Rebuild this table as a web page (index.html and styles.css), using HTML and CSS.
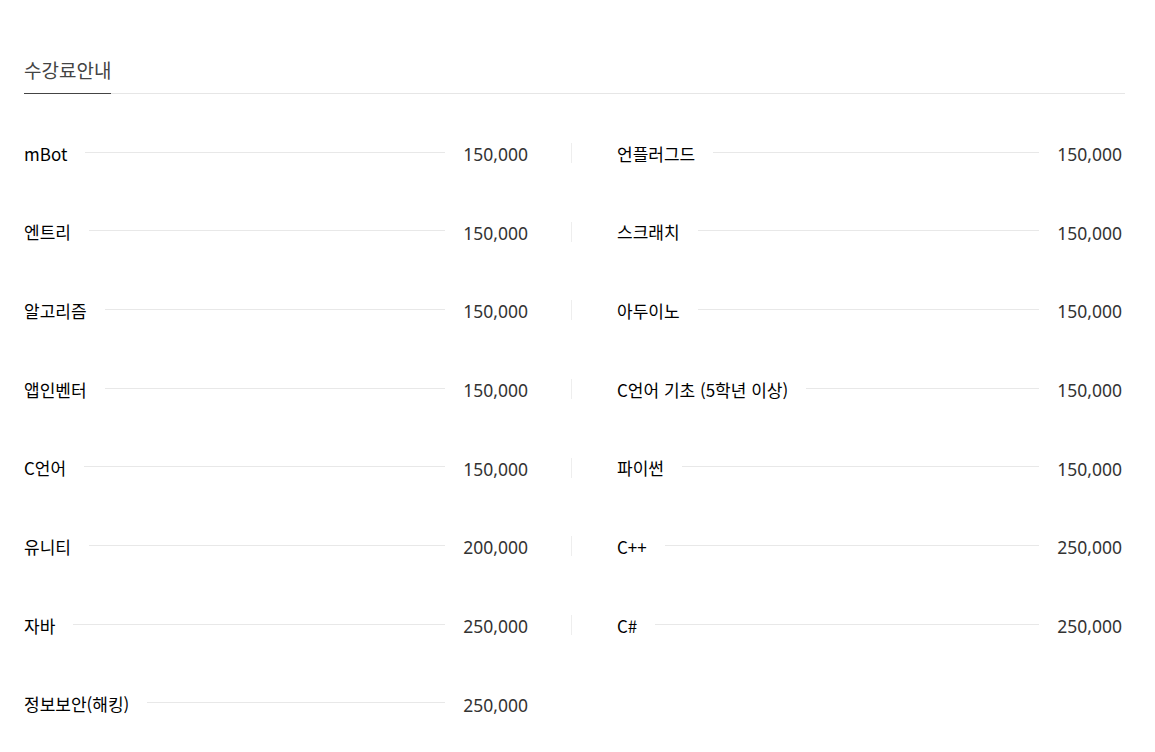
FILE: index.html
```html
<!DOCTYPE html>
<html lang="ko">
<head>
    <meta charset="UTF-8">
    <meta name="viewport" content="width=device-width, initial-scale=1.0">
    <title>수강료안내</title>
    <link rel="stylesheet" href="styles.css">
</head>
<body>
    <div class="container">
        <div class="tab-bar">
            <h2 class="tab-title">수강료안내</h2>
        </div>
        <ul class="fee-list">
            <li class="fee-item"><span class="name">mBot</span><span class="dots"></span><span class="price">150,000</span></li>
            <li class="fee-item"><span class="name">언플러그드</span><span class="dots"></span><span class="price">150,000</span></li>
            <li class="fee-item"><span class="name">엔트리</span><span class="dots"></span><span class="price">150,000</span></li>
            <li class="fee-item"><span class="name">스크래치</span><span class="dots"></span><span class="price">150,000</span></li>
            <li class="fee-item"><span class="name">알고리즘</span><span class="dots"></span><span class="price">150,000</span></li>
            <li class="fee-item"><span class="name">아두이노</span><span class="dots"></span><span class="price">150,000</span></li>
            <li class="fee-item"><span class="name">앱인벤터</span><span class="dots"></span><span class="price">150,000</span></li>
            <li class="fee-item"><span class="name">C언어 기초 (5학년 이상)</span><span class="dots"></span><span class="price">150,000</span></li>
            <li class="fee-item"><span class="name">C언어</span><span class="dots"></span><span class="price">150,000</span></li>
            <li class="fee-item"><span class="name">파이썬</span><span class="dots"></span><span class="price">150,000</span></li>
            <li class="fee-item"><span class="name">유니티</span><span class="dots"></span><span class="price">200,000</span></li>
            <li class="fee-item"><span class="name">C++</span><span class="dots"></span><span class="price">250,000</span></li>
            <li class="fee-item"><span class="name">자바</span><span class="dots"></span><span class="price">250,000</span></li>
            <li class="fee-item"><span class="name">C#</span><span class="dots"></span><span class="price">250,000</span></li>
            <li class="fee-item"><span class="name">정보보안(해킹)</span><span class="dots"></span><span class="price">250,000</span></li>
        </ul>
    </div>
</body>
</html>
```

FILE: styles.css
```css
body {
    margin: 0;
    padding: 0;
    background: #fff;
    font-family: "Noto Sans CJK KR", "Noto Sans", sans-serif;
    color: #111;
}

.container {
    width: 1101px;
    padding: 57px 0 0 24px;
}

/* title with underline */
.tab-bar {
    border-bottom: 1px solid #e6e6e6;
}
.tab-title {
    display: inline-block;
    margin: 0 0 -1px 0;
    padding-bottom: 10px;
    border-bottom: 1px solid #444;
    font-size: 19px;
    font-weight: 400;
    line-height: 26px;
    color: #444;
}

.fee-list {
    list-style: none;
    margin: 0;
    padding: 49px 0 0 0;
    display: grid;
    grid-template-columns: 547px 1fr;
    row-gap: 58.7px;
}

.fee-item {
    display: flex;
    align-items: center;
    height: 20px;
    padding-right: 43px;
}
.fee-item:nth-child(even) {
    border-left: 1px solid #eee;
    padding-left: 45px;
    padding-right: 3px;
}

.name {
    font-size: 17px;
    font-weight: 400;
    color: #000;
    white-space: nowrap;
}

.dots {
    flex: 1;
    height: 0;
    border-top: 1px solid #e8e8e8;
    margin: 0 18px;
    position: relative;
    top: -1px;
}

.price {
    font-family: "Noto Sans", sans-serif;
    font-size: 17.5px;
    color: #333;
    position: relative;
    top: 1px;
}
```
